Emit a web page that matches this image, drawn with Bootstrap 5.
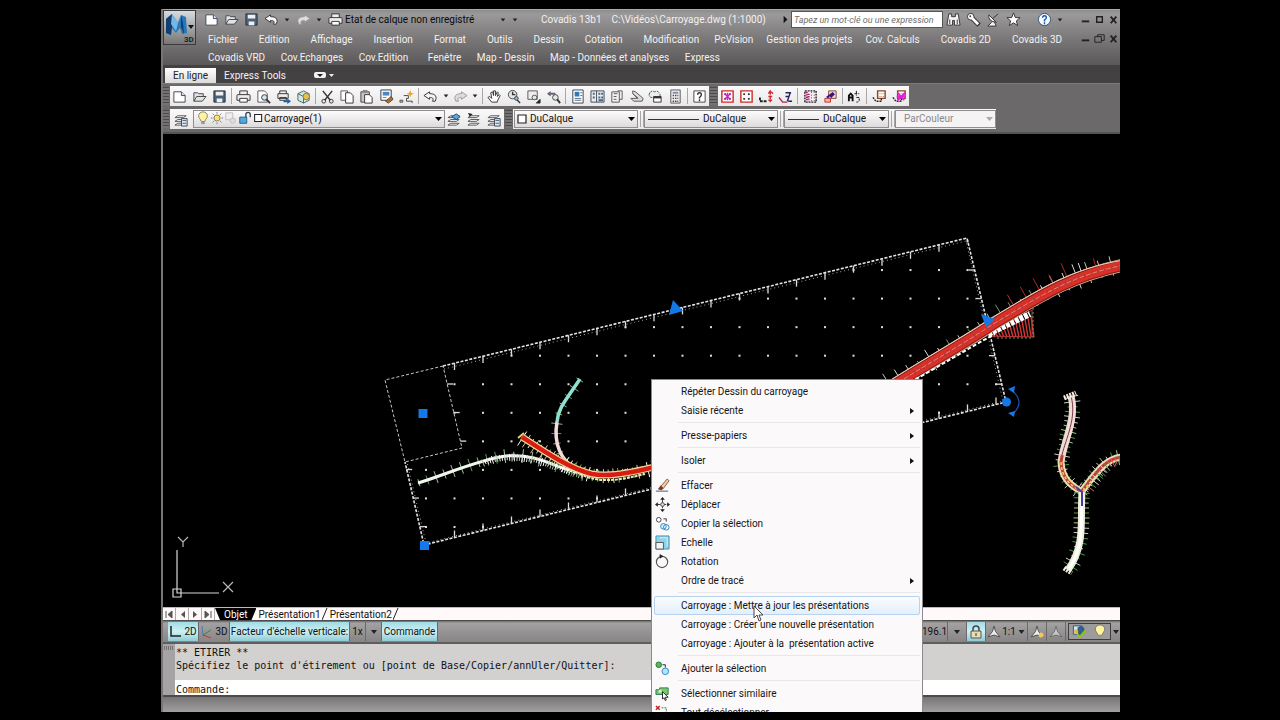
<!DOCTYPE html>
<html lang="fr">
<head>
<meta charset="utf-8">
<meta name="viewport" content="width=device-width, initial-scale=1">
<title>Covadis 13b1</title>
<link href="https://cdn.jsdelivr.net/npm/bootstrap@5.3.0/dist/css/bootstrap.min.css" rel="stylesheet">
<style>
  body { background: #000; font: 10px/14px Roboto, "Liberation Sans", sans-serif; color: #111; min-height: 100vh; padding: 9px 0 8px; }
  button, input, select { font: inherit; color: inherit; border: 0; background: none; padding: 0; }
  a { color: inherit; text-decoration: none; }
  svg { display: block; flex: none; }
  .app { width: 75%; padding-left: 1px; position: relative; overflow: hidden; }
  .app-frame { border-left: 2px solid #777576; min-height: 100%; }
  .cell { width: 20px; height: 18px; display: flex; align-items: center; justify-content: center; flex: none; }
  .cell-s { width: 12px; }
  .header-bar { background: linear-gradient(#8e8c8d, #9b999a 8%, #7b797a 50%, #5a5858); height: 56px; color: #f3f1f1; border-top: 1px solid #aaa; }
  .app-btn { width: 33px; height: 35px; border: 1px solid #3c3b3b; background: linear-gradient(#d9dcdf, #9d9d9e 60%, #777576); align-self: flex-start; }
  .quick { height: 19px; }
  .quick-start { margin-left: 5px; }
  .quick-end { margin-right: 11px; }
  .quick-win { padding-left: 12px; }
  .status-name { width: 152px; color: #0a0a0a; }
  .doc-title { width: 238px; white-space: nowrap; }
  .search { width: 152px; height: 17px; background: #fff; border: 1px solid #555; font-size: 9px; font-style: italic; padding: 0 2px; color: #555; }
  .search::placeholder { color: #6f6d6d; opacity: 1; }
  .menus { margin: 2px 0 0 12px; height: 17px; align-items: center; white-space: nowrap; }
  .menus-start { gap: 21px; margin-right: 15px; }
  .menus-end { gap: 13px; }
  .menus-2 { width: 512px; margin: 1px 0 0 12px; height: 17px; align-items: center; white-space: nowrap; }
  .win { width: 14px; }
  .ribbon { background: #434142; height: 18px; color: #f3f1f1; }
  .ribbon .active { background: linear-gradient(#fff, #dcdada); color: #222; }
  .tab-a { width: 51px; height: 15px; margin-left: 2px; }
  .tab-b { width: 78px; height: 15px; }
  .tab-c { margin-left: 20px; }
  .pill { width: 12px; height: 6px; background: #f3f1f1; border-radius: 2px; }
  .panel { background: #6b696a; height: 51px; border-top: 1px solid #7d7b7c; border-bottom: 2px solid #555354; padding-top: 2px; }
  .bar-1 { margin-bottom: 3px; }
  .strip { background: linear-gradient(#fbfafa, #e9e7e8); height: 20px; }
  .strip .cell { width: auto; flex: 2 1 0; min-width: 0; }
  .strip .cell-s { flex-grow: 1; }
  .grip { width: 6px; height: 18px; background: repeating-linear-gradient(#4c4a4b 0 1px, #747273 1px 3px); margin: 0 1px 0 0; flex: none; }
  .grip-m { width: 7px; margin: 0 1px; }
  .rule { width: 1px; height: 16px; background: #a8a6a6; margin: 0 2px; flex: none; }
  .combo { appearance: none; height: 18px; border: 1px solid #8f8d8e; color: #111; background: url("data:image/svg+xml,%3Csvg xmlns='http://www.w3.org/2000/svg' width='7' height='4'%3E%3Cpath d='M0 0h7L3.500 4z'/%3E%3C/svg%3E") no-repeat right 2px center, linear-gradient(#fdfcfc, #dddbdc); }
  .combo-layer { width: 252px; padding-left: 70px; }
  .combo-color { width: 124px; padding-left: 15px; }
  .combo-line { background-image: url("data:image/svg+xml,%3Csvg xmlns='http://www.w3.org/2000/svg' width='7' height='4'%3E%3Cpath d='M0 0h7L3.500 4z'/%3E%3C/svg%3E"), linear-gradient(#333, #333), linear-gradient(#fdfcfc, #dddbdc); background-repeat: no-repeat; }
  .combo-l1 { width: 134px; padding-left: 58px; background-position: right 2px center, 3px center, 0 0; background-size: auto, 51px 1px, auto; }
  .combo-l2 { width: 105px; padding-left: 38px; background-position: right 2px center, 3px center, 0 0; background-size: auto, 31px 1px, auto; }
  .combo-off { width: 101px; padding-left: 8px; color: #8a8889; opacity: 1; background: url("data:image/svg+xml,%3Csvg xmlns='http://www.w3.org/2000/svg' width='7' height='4'%3E%3Cpath fill='%23aaa' d='M0 0h7L3.500 4z'/%3E%3C/svg%3E") no-repeat right 2px center #f5f3f4; }
  .over { position: absolute; left: 3px; top: 1px; pointer-events: none; }
  .lead-in { padding-left: 1px; }
  .stage { background: #000; min-height: 0; }
  .sheet-tabs { height: 13px; background: #fff9f9; line-height: 13px; border-top: 1px solid #bbb; }
  .sheet-tabs .nav-b { width: 13px; border-right: 1px solid #aaa; height: 12px; }
  .sheet { height: 12px; padding: 0 1px 0 2px; color: #111; }
  .sheet.on { background: #000; color: #fff; clip-path: polygon(0 0, 100% 0, calc(100% - 5px) 100%, 5px 100%); padding: 0 9px; }
  .slash { width: 6px; height: 12px; }
  .status { height: 22px; background: linear-gradient(#6d6b6c, #a3a1a2 10%, #868485); border-top: 1px solid #4e4c4d; line-height: 19px; padding-left: 5px; white-space: nowrap; align-items: center; }
  .seg { height: 19px; border-right: 1px solid #6a6869; display: flex; align-items: center; justify-content: center; flex: none; gap: 2px; padding: 0; }
  .seg.lit { background: linear-gradient(#a2dbe4, #cdf0f4 50%, #8fcbd6); }
  .seg-caret { width: 16px; } .seg-icon { width: 19px; } .seg-axis { width: 31px; } .seg-scale { width: 42px; } .seg-cmd { width: 56px; } .seg-factor { width: 120px; }
  .coords { width: 26px; }
  .tray { width: 43px; height: 17px; border: 1px solid #3f3d3e; background: #9d9b9c; margin: 0 2px; }
  .console { background: #d3d0d0; border-top: 2px solid #5f5d5e; font: 10px/13px "DejaVu Sans Mono", monospace; }
  .console-grip { width: 12px; background: #a5a3a4; }
  .log { height: 36px; padding: 2px 0 0 1px; }
  .prompt { height: 15px; background: #fff; padding: 3px 0 0 1px; }
  .foot { height: 17px; border-top: 2px solid #4c4a4b; background: linear-gradient(#777576, #a19fa0); }
  .context { position: absolute; left: 491px; top: 370px; width: 272px; background: #fcf9fa; border: 1px solid #8b898a; padding: 2px; z-index: 2; }
  .context button { display: flex; align-items: center; width: 100%; height: 19px; border: 1px solid transparent; border-radius: 2px; color: #151515; }
  .context .ico { width: 26px; display: flex; }
  .context .hot { border-color: #b5d3ee; background: linear-gradient(#fafcfe, #e3effb); }
  .context .line { height: 1px; background: #e9e7ea; margin: 2px 0 3px 24px; }
  .pointer { position: absolute; left: 593px; top: 596px; z-index: 3; }
</style>
</head>
<body class="d-flex flex-column">
<svg width="0" height="0" class="position-absolute" aria-hidden="true">
  <defs>
    <g id="new"><path d="M2 3h8l4 4v7H2z" fill="#fff" stroke="#3a4656"/><path d="M10 3v4h4" fill="#dde" stroke="#3a4656"/></g>
    <g id="open"><path d="M2 13V4h4l1 1h5v3M2 13l3-5h10l-4 5z" fill="#dfe2e6" stroke="#444"/></g>
    <g id="save"><path d="M2 2h12v12H2z" fill="#4d6275" stroke="#27333f"/><path d="M4 3h8v4H4zM5 10h6v4H5z" fill="#edf1f5"/></g>
    <g id="print"><path d="M4 6V2h8v4M2 6h12q1 0 1 1v5H1V7q0-1 1-1z" fill="#eee" stroke="#333"/><path d="M4 10h8v4H4z" fill="#fff" stroke="#333"/></g>
    <g id="preview"><path d="M2 2h7l3 3v9H2z" fill="#fff" stroke="#555"/><circle cx="9" cy="9" r="3" fill="#cfe6ef" stroke="#333"/><path d="M11 11l4 4" stroke="#333" stroke-width="2"/></g>
    <g id="publish"><path d="M4 5V2h7v3M2 5h11v5H2zM4 9h7v3H4z" fill="#eee" stroke="#333"/><path d="M8 12h4v-2l4 3-4 3v-2H8z" fill="#1d5fae"/></g>
    <g id="dwf"><path d="M2 5l6-3 6 3v7l-6 3-6-3z" fill="#cfe8e3" stroke="#4a666b"/><path d="M2 5l6 3v7" fill="none" stroke="#4a666b"/><circle cx="11" cy="8" r="3.500" fill="#e8c23c" stroke="#777"/></g>
    <g id="cut"><path d="M3 2l8 10M13 2L5 12" stroke="#333" stroke-width="1.500"/><circle cx="4" cy="13" r="2" fill="none" stroke="#333"/><circle cx="12" cy="13" r="2" fill="none" stroke="#333"/></g>
    <g id="copy"><path d="M1 2h7v10H1z" fill="#fff" stroke="#555"/><path d="M6 4h5l3 3v8H6z" fill="#fff" stroke="#333"/></g>
    <g id="paste"><path d="M2 3h9v11H2z" fill="#c9c5b8" stroke="#444"/><path d="M4 1h5v3H4z" fill="#888"/><path d="M6 6h5l3 3v6H6z" fill="#fff" stroke="#333"/></g>
    <g id="match"><path d="M2 1h11v11H2z" fill="#fff" stroke="#334"/><path d="M4 3h7v4H4z" fill="#4a88be"/><path d="M4 9h4" stroke="#4a88be"/><path d="M7 13l6-5 2 3-5 4z" fill="#b3702c" stroke="#543"/></g>
    <g id="block"><path d="M1 12h3v2H1zM5 7h5v3H8v3h6v2" fill="none" stroke="#444"/><path d="M12 1l1 3 3 1-3 1-1 3-1-3-3-1 3-1z" fill="#f0a028"/></g>
    <g id="undo"><path d="M1 7l6-4v2c4 0 7 1 7 5l-1 3h-3c2-3 0-4-3-4v2z" fill="#f6f6f6" stroke="#333"/></g>
    <g id="redo"><path d="M15 7L9 3v2c-4 0-7 1-7 5l1 3h3c-2-3 0-4 3-4v2z" fill="#ddd" stroke="#999"/></g>
    <g id="car"><path d="M5 6h6l-3 4z" fill="#222"/></g>
    <g id="right"><path d="M6 4l4 4-4 4z" fill="#111"/></g>
    <g id="pan"><path d="M5 14L1 9l2-1 2 2-1-6 2-1 1 4V2h2v5l2-4 1 1-1 4 2-2 1 1-3 6v1z" fill="#fff" stroke="#333"/></g>
    <g id="zrt"><circle cx="6" cy="6" r="4.500" fill="#dce8ee" stroke="#444"/><path d="M6 3v3h3M10 11l4 4" fill="none" stroke="#333" stroke-width="1.500"/><circle cx="10" cy="10" r="2" fill="#9cb8c4" stroke="#444"/></g>
    <g id="zwin"><path d="M2 2h10v9H2z" fill="#eee" stroke="#555"/><circle cx="9" cy="9" r="2.500" fill="#dce8ee" stroke="#555"/><path d="M15 11v4h-4z" fill="#111" stroke="#333"/></g>
    <g id="zprev"><path d="M1 5l4-3v2h5v2H5v2z" fill="#667"/><circle cx="10" cy="9" r="3" fill="#dce8ee" stroke="#444"/><path d="M12 11l3 4" stroke="#333" stroke-width="2"/></g>
    <g id="props"><path d="M3 1h11v14H3z" fill="#fff" stroke="#345"/><path d="M5 3h5v5H5z" fill="#2c78b8"/><path d="M11 4h2M11 7h2M5 10h7M5 12h7" stroke="#567"/></g>
    <g id="dc"><path d="M1 2h14v12H1zM7 2v12" fill="#e8edf2" stroke="#445"/><path d="M3 4h2v2H3zM3 8h2v2H3zM9 4h2v2H9zM12 4h2v2h-2zM9 8h2v2H9zM12 8h2v2h-2zM9 11h5v2H9z" fill="#467"/></g>
    <g id="tp"><path d="M3 3h8v11H3zM9 2h5v9h-3" fill="#f2f2f2" stroke="#555"/><path d="M5 5h4M5 8h3M5 11h3" stroke="#555"/></g>
    <g id="sheets"><path d="M2 10l3 3h9l1-3-8-7-3-1v3l5 5zM4 5l6 5" fill="#ddd" stroke="#555"/></g>
    <g id="mark"><path d="M2 4q2-3 5-1 4-2 5 2 2 1 0 4H3q-3-2-1-5z" fill="#e8eee8" stroke="#456" stroke-dasharray="3 1"/><path d="M6 8h8v6H6z" fill="#fff" stroke="#333"/><path d="M6 9h8" stroke="#333" stroke-width="2"/></g>
    <g id="calc"><path d="M3 1h10v14H3z" fill="#eee" stroke="#555"/><path d="M5 3h6v2H5z" fill="#88a"/><path d="M5 7h6M5 10h6M5 13h6" stroke="#444" stroke-width="1.500" stroke-dasharray="1.500 1"/></g>
    <g id="help"><path d="M2 2h12v12H2z" fill="#fff" stroke="#444"/><path d="M6 6q0-2 2-2t2 2q0 1-2 3v1M8 11v2" fill="none" stroke="#333" stroke-width="1.500"/></g>
    <g id="gridr"><path d="M2 2h12v12H2z" fill="#fff" stroke="#cf2c26" stroke-width="1.500"/><path d="M5 5h1v1H5zM10 5h1v1h-1zM5 10h1v1H5zM10 10h1v1h-1z" stroke="#222" fill="#222"/></g>
    <g id="gridm"><use href="#gridr"/><path d="M5 5l6 6M11 5l-6 6M8 4v8" stroke="#d020c8" stroke-width="1.500"/></g>
    <g id="pole"><path d="M1 9v4h7" fill="none" stroke="#222" stroke-width="2" stroke-dasharray="3 1"/><path d="M12 2v12M10 5l2-3 3 3M10 8h4M10 12h4" fill="none" stroke="#cf2c36" stroke-width="1.500" stroke-dasharray="4 1"/></g>
    <g id="pole2"><path d="M1 9l4 5h5" fill="none" stroke="#b02a58" stroke-width="1.500"/><path d="M8 4h6M13 4l-3 9M8 8h3M11 13h4" fill="none" stroke="#27275e" stroke-width="1.500"/></g>
    <g id="hatch"><path d="M2 2h12v12H2z" fill="#f8eef4" stroke="#222" stroke-width="1.500" stroke-dasharray="2 1"/><path d="M4 3v10M6 5v8" stroke="#a02060" stroke-width="2" stroke-dasharray="1.500 1"/><path d="M9 3v10M12 3v10" stroke="#333" stroke-dasharray="1 2"/></g>
    <g id="hatch2"><path d="M6 2h8v8H6z" fill="#f2d9c8" stroke="#8c4820"/><path d="M2 10h6v4H2z" fill="#f6b8a8" stroke="#c03030"/><path d="M4 9l7-5M8 9l4-4" stroke="#2c1690" stroke-width="2"/></g>
    <g id="alpha"><path d="M2 13V7l2-2 2 2v6M2 9h4" fill="none" stroke="#111" stroke-width="2"/><path d="M10 2v5M8 5h5M10 9h3v3q0 2-3 2" fill="none" stroke="#111" stroke-dasharray="3 1"/></g>
    <g id="tbl"><path d="M6 2h8v8H6z" fill="#fff" stroke="#8c4820" stroke-width="1.500"/><path d="M8 5h5M8 8h5" stroke="#b07050" stroke-dasharray="1 1"/><path d="M1 9l3 4h6v-3" fill="none" stroke="#222" stroke-width="1.500" stroke-dasharray="2 1"/></g>
    <g id="tblm"><use href="#tbl"/><path d="M6 12l8-8M6 4l7 8M5 8h9" stroke="#e020d8" stroke-width="2"/></g>
    <g id="layers"><path d="M4 4h9l-3 2H1zM4 8h9l-3 2H1zM4 12h9l-3 2H1z" fill="#f6f6f6" stroke="#555"/></g>
    <g id="layprop"><use href="#layers"/><path d="M8 7h6v8H8z" fill="#dfe8f0" stroke="#445"/><path d="M9 9h4M9 12h4" stroke="#368"/></g>
    <g id="laycur"><use href="#layers"/><path d="M5 5l5-3 4 3-4 3z" fill="#58a8d8" stroke="#247"/></g>
    <g id="layback"><use href="#layers"/><path d="M1 1l5 1-3 3z" fill="#222"/></g>
    <g id="bulb"><path d="M6 12C5 9 3 8 3 5.500a5 4.500 0 0 1 10 0C13 8 11 9 10 12z" fill="#fff3a0" stroke="#776"/><path d="M6 12h4v3H6z" fill="#999"/></g>
    <g id="sun"><circle cx="8" cy="8" r="3.500" fill="#fbe26c" stroke="#776"/><path d="M8 1v2M8 13v2M1 8h2M13 8h2M3 3l1.500 1.500M11.500 11.500L13 13M3 13l1.500-1.500M11.500 4.500L13 3" stroke="#776"/></g>
    <g id="vp"><path d="M2 2h8v8H2z" fill="#eee" stroke="#bbb"/><circle cx="10" cy="11" r="3" fill="#ddd" stroke="#bbb"/></g>
    <g id="unlock"><path d="M2 7h8v7H2z" fill="#5aa6dc" stroke="#135a8c"/><path d="M9 7V4q0-2.500 2.500-2.500T14 4v3" fill="none" stroke="#345" stroke-width="1.500"/></g>
    <g id="sq"><path d="M3 4h8v8H3z" fill="#fff" stroke="#222" stroke-width="1.200"/></g>
    <g id="binoc"><path d="M3 2h3v3h4V2h3l2 12H9v-5H7v5H1z" fill="#f4f4f4" stroke="#333"/><path d="M4 8v5M12 8v5" stroke="#333"/></g>
    <g id="key"><path d="M7 7l7 7" stroke="#333" stroke-width="5"/><circle cx="5" cy="5" r="3.500" fill="#fff" stroke="#333"/><path d="M6 6l7 7" stroke="#fff" stroke-width="3"/><circle cx="4.500" cy="4.500" r="1" fill="#444"/></g>
    <g id="dish"><path d="M3 3q-1 7 8 8zM7 7l6-5M6 11l-4 4h9l-2-4" fill="#f4f4f4" stroke="#333"/></g>
    <g id="star"><path d="M8 1l2 5h5l-4 3.500 1.500 5L8 11.500 3.500 14.500l1.500-5L1 6h5z" fill="#fff" stroke="#333"/></g>
    <g id="qm"><circle cx="8" cy="8" r="6.500" fill="#f4f8fc" stroke="#2a4f80"/><path d="M6 6q0-2 2-2t2 2q0 1-2 2.500V10M8 11v2" fill="none" stroke="#1a56a8" stroke-width="1.500"/></g>
    <g id="min"><path d="M4 10h8" stroke="#222" stroke-width="2"/></g>
    <g id="max"><path d="M5 5h6v6H5z" fill="none" stroke="#222" stroke-width="1.500"/></g>
    <g id="rest"><path d="M6 6V4h7v6h-3M3 6h7v6H3z" fill="none" stroke="#222"/></g>
    <g id="close"><path d="M5 5l6 7M11 5l-6 7" stroke="#222" stroke-width="2"/></g>
    <g id="erase"><path d="M1 14h13" stroke="#357"/><path d="M6 9L13 1l2 2-6 8z" fill="#e8d0a8" stroke="#854"/><path d="M3 12l3-4 3 3-2 2z" fill="#7a3a20"/></g>
    <g id="move"><path d="M8 1v14M1 8h14" stroke="#333" stroke-dasharray="5 1"/><path d="M8 0l2.500 3h-5zM8 16l2.500-3h-5zM0 8l3-2.500v5zM16 8l-3-2.500v5z" fill="#222"/><circle cx="8" cy="8" r="2" fill="#ddd" stroke="#444"/></g>
    <g id="cpy"><circle cx="4" cy="4" r="2.500" fill="#fff" stroke="#444"/><path d="M9 3h3v3" fill="none" stroke="#333"/><circle cx="9" cy="11" r="3" fill="#dff2fb" stroke="#2a86c0"/><circle cx="12" cy="12" r="3" fill="none" stroke="#2a86c0"/></g>
    <g id="scale"><path d="M1 1h14v14H1z" fill="#8fd2e6" stroke="#4492b0"/><path d="M5 3h8v9" fill="none" stroke="#d8f2fa"/><path d="M1 8h8v7H1z" fill="#eef4f6" stroke="#555"/></g>
    <g id="rot"><circle cx="7.500" cy="8.500" r="6" fill="none" stroke="#555" stroke-width="1.200"/><path d="M5 0l4 2.500L5 5z" fill="#222"/></g>
    <g id="addsel"><circle cx="4" cy="4" r="3" fill="#5cb848" stroke="#275"/><path d="M8 4h3v3" fill="none" stroke="#222"/><circle cx="11" cy="11" r="3.500" fill="#b8e4f8" stroke="#2a86c0"/></g>
    <g id="simil"><path d="M1 4h4v-2h9v7H1z" fill="#7cc868" stroke="#275"/><path d="M4 4h3v3H4z" fill="#d8f4cc"/><path d="M8 6l6 6h-3l1 3-1 .5L9.500 12.500 8 14z" fill="#fff" stroke="#222"/></g>
    <g id="desel"><path d="M1 1l4 4M5 1L1 5" stroke="#c02020" stroke-width="1.500"/><path d="M7 3h5v6M3 8v5h6" fill="none" stroke="#275" stroke-dasharray="2 1"/></g>
    <g id="scl"><path d="M8 2l1.500 5.500L14 13l-6-2-6 2 4.500-5.500z" fill="#eee" stroke="#555"/></g>
  </defs>
</svg>

<main class="app mx-auto flex-grow-1 d-flex flex-column">
<div class="app-frame d-flex flex-column flex-grow-1">
  <header class="header-bar d-flex">
    <button class="app-btn" aria-label="Menu de l'application">
      <svg width="31" height="33" viewBox="0 0 31 33"><path d="M2 8l6-5 6 9 3-8 5 2 1 16-5 1-2-6-4 5-5-6v8l-5-2z" fill="#2878bb"/><path d="M2 8l6-5v14l-1 7-5-2z" fill="#123f70"/><path d="M8 3l6 9-2 8-5-7z" fill="#75b8e6"/><path d="M17 4l2 8 1 11-3-7z" fill="#0f3f73"/><path d="M24 14h6l-3 4z" fill="#111"/><text x="20" y="31" font-size="8" font-weight="700" fill="#222">3D</text></svg>
    </button>
    <div class="flex-grow-1">
      <div class="quick d-flex align-items-center">
        <div class="quick-start d-flex" data-icons="new:Nouveau open:Ouvrir save:Enregistrer undo:Annuler car:Historique redo:Rétablir car:Suite print:Tracer"></div>
        <span class="status-name">Etat de calque non enregistré</span>
        <div class="d-flex flex-grow-1" data-icons="car:Calques car:Personnaliser"></div>
        <span class="doc-title">Covadis 13b1 &nbsp; &nbsp;C:\Vidéos\Carroyage.dwg (1:1000)</span>
        <div class="d-flex" data-icons="right:Développer"></div>
        <input class="search" type="text" aria-label="Rechercher" placeholder="Tapez un mot-clé ou une expression">
        <div class="quick-end d-flex" data-icons="binoc:Rechercher key:Abonnement dish:Communication star:Favoris"></div>
        <div class="d-flex" data-icons="qm:Aide car:Options"></div>
        <div class="quick-win d-flex" data-win="min:Réduire max:Agrandir close:Fermer"></div>
      </div>
      <div class="d-flex">
        <nav class="menus d-flex flex-grow-1">
          <div class="menus-start d-flex"><a href="#">Fichier</a><a href="#">Edition</a><a href="#">Affichage</a><a href="#">Insertion</a><a href="#">Format</a><a href="#">Outils</a><a href="#">Dessin</a><a href="#">Cotation</a><a href="#">Modification</a></div>
          <div class="menus-end d-flex"><a href="#">PcVision</a><a href="#">Gestion des projets</a><a href="#">Cov. Calculs</a><a href="#" class="ps-2">Covadis 2D</a><a href="#" class="ps-2">Covadis 3D</a></div>
        </nav>
        <div class="d-flex" data-win="min:Réduire rest:Restaurer close:Fermer"></div>
      </div>
      <nav class="menus-2 d-flex justify-content-between">
        <a href="#">Covadis VRD</a><a href="#">Cov.Echanges</a><a href="#">Cov.Edition</a><a href="#" class="ps-1">Fenêtre</a><a href="#">Map - Dessin</a><a href="#">Map - Données et analyses</a><a href="#">Express</a>
      </nav>
    </div>
  </header>

  <div class="ribbon d-flex align-items-end">
    <button class="tab-a active">En ligne</button>
    <button class="tab-b">Express Tools</button>
    <button class="tab-c d-flex align-items-center mb-1" aria-label="Réduire le ruban"><span class="pill d-flex justify-content-center"><svg width="6" height="6" viewBox="0 0 6 6"><path d="M0 2h6L3 5z" fill="#222"/></svg></span><svg width="14" height="8" viewBox="0 0 14 8"><path d="M3 3h5L5.500 6z" fill="#eee"/></svg></button>
  </div>

  <section class="panel">
    <div class="bar-1 d-flex align-items-center">
      <span class="grip"></span>
      <div class="strip d-flex align-items-center" data-tools="59=new:Nouveau open:Ouvrir save:Enregistrer|79=print:Tracer preview:Aperçu publish:Publier dwf:DWF|98=cut:Couper copy:Copier paste:Coller match:Propriétés block:Bloc|59=undo:Annuler car:Historique redo:Rétablir car:Suite|78=pan:Panoramique zrt:Zoom zwin:Fenêtre zprev:Précédent|117=props:Propriétés dc:DesignCenter tp:Palettes sheets:Feuilles mark:Annotations calc:Calculatrice|19=help:Aide"></div>
      <span class="grip grip-m"></span>
      <div class="strip d-flex align-items-center" data-tools="77=gridm:Carroyage gridr:Grille pole:Point pole2:Polygone|40=hatch:Hachures hatch2:Remplir|19=alpha:Texte|40=tbl:Tableau tblm:Supprimer"></div>
    </div>
    <div class="d-flex align-items-center">
      <span class="grip"></span>
      <div class="strip d-flex align-items-center">
        <div class="d-flex" style="width:23px" data-icons="layprop:Calques"></div>
        <div class="position-relative">
          <select class="combo combo-layer" aria-label="Calque"><option>Carroyage(1)</option></select>
          <span class="over d-flex" id="layerState"></span>
        </div>
        <div class="d-flex" style="width:59px" data-icons="laycur:Courant layback:Précédent layprop:Etats"></div>
      </div>
      <span class="grip grip-m"></span>
      <div class="strip lead-in d-flex align-items-center">
        <div class="position-relative">
          <select class="combo combo-color" aria-label="Couleur"><option>DuCalque</option></select>
          <svg class="over" width="14" height="16" viewBox="2 0 14 16"><use href="#sq"/></svg>
        </div>
        <span class="rule"></span><span class="rule ms-0 me-0"></span>
        <select class="combo combo-line combo-l1" aria-label="Type de ligne"><option>DuCalque</option></select>
        <span class="rule"></span><span class="rule ms-0 me-0"></span>
        <select class="combo combo-line combo-l2" aria-label="Epaisseur"><option>DuCalque</option></select>
        <span class="rule"></span><span class="rule ms-0 me-0"></span>
        <select class="combo combo-off" aria-label="Style de tracé" disabled><option>ParCouleur</option></select>
      </div>
    </div>
  </section>

  <section class="stage flex-grow-1 position-relative">
    <svg id="plan" class="position-absolute w-100 h-100" viewBox="163 134 957 473" preserveAspectRatio="xMidYMid slice" role="img" aria-label="Plan du projet routier"></svg>
  </section>

  <div class="sheet-tabs d-flex">
    <button class="nav-b" aria-label="Premier"><svg width="12" height="11" viewBox="0 0 12 11"><path d="M3 2v7M9 2v7L5 5.500z" stroke="#555" fill="#555"/></svg></button>
    <button class="nav-b" aria-label="Précédent"><svg width="12" height="11" viewBox="0 0 12 11"><path d="M9 2v7L5 5.500z" fill="#555"/></svg></button>
    <button class="nav-b" aria-label="Suivant"><svg width="12" height="11" viewBox="0 0 12 11"><path d="M4 2v7l4-3.500z" fill="#555"/></svg></button>
    <button class="nav-b" aria-label="Dernier"><svg width="12" height="11" viewBox="0 0 12 11"><path d="M3 2v7l4-3.500zM9 2v7" stroke="#555" fill="#555"/></svg></button>
    <a href="#" class="sheet on">Objet</a>
    <a href="#" class="sheet">Présentation1</a><svg class="slash" viewBox="0 0 6 12"><path d="M0 12L5 0" stroke="#222"/></svg>
    <a href="#" class="sheet">Présentation2</a><svg class="slash" viewBox="0 0 6 12"><path d="M0 12L5 0" stroke="#222"/></svg>
  </div>

  <div class="status d-flex">
    <button class="seg lit seg-axis"><svg width="13" height="14" viewBox="0 0 13 14"><path d="M2 1v10h10" fill="none" stroke="#222" stroke-width="1.500"/></svg>2D</button>
    <button class="seg seg-axis"><svg width="13" height="14" viewBox="0 0 13 14"><path d="M2 1l1 10" stroke="#57a"/><path d="M3 10l8-5" stroke="#3a8a3a"/><path d="M3 10l8 3" stroke="#c33"/></svg>3D</button>
    <button class="seg lit seg-factor">Facteur d'échelle verticale:</button>
    <button class="seg seg-caret">1x</button>
    <button class="seg seg-caret" aria-label="Facteur"><svg width="14" height="16" viewBox="1 0 14 16"><use href="#car"/></svg></button>
    <button class="seg lit seg-cmd">Commande</button>
    <span class="flex-grow-1"></span>
    <span class="seg coords">196.1</span>
    <button class="seg seg-icon" aria-label="Echelle de vue"><svg width="16" height="16"><use href="#car"/></svg></button>
    <button class="seg lit seg-icon" aria-label="Verrouiller"><svg width="14" height="16" viewBox="0 0 14 16"><path d="M4 8V5q0-3 3-3t3 3v3" fill="none" stroke="#444" stroke-width="1.500"/><path d="M2 7h10v7H2z" fill="#e8ddb0" stroke="#555"/><path d="M7 9v3" stroke="#333"/></svg></button>
    <button class="seg seg-scale gap-0"><svg width="16" height="16"><use href="#scl"/></svg>1:1<svg width="11" height="16" viewBox="3 0 10 16"><use href="#car"/></svg></button>
    <button class="seg seg-icon" aria-label="Annotations visibles"><svg width="16" height="16"><use href="#scl"/><circle cx="12" cy="11" r="2.500" fill="#f0c860"/></svg></button>
    <button class="seg seg-icon" aria-label="Echelles automatiques"><svg width="16" height="16" opacity=".6"><use href="#scl"/></svg></button>
    <span class="tray d-flex align-items-center justify-content-around"><svg width="16" height="15" viewBox="0 0 16 16"><path d="M2 2h9v9H2z" fill="#cfe6f4" stroke="#357"/><ellipse cx="10" cy="7" rx="4" ry="5" fill="#345f8c"/><path d="M6 11l3 3 6-7" fill="none" stroke="#8fc020" stroke-width="2.500"/><path d="M3 6h4v4H3z" fill="#e8b83c"/></svg><svg width="16" height="15" viewBox="0 0 16 16"><use href="#bulb"/></svg></span>
    <button class="seg border-0" aria-label="Menu d'état"><svg width="7" height="16" viewBox="5 0 7 16"><use href="#car"/></svg></button>
  </div>

  <div class="console d-flex">
    <div class="console-grip"><svg width="12" height="6" viewBox="0 0 12 6"><path d="M1 3h10M1 5h10" stroke="#444" stroke-dasharray="1 1"/></svg></div>
    <div class="flex-grow-1">
      <div class="log"><div>** ETIRER **</div><div>Spécifiez le point d'étirement ou [point de Base/Copier/annUler/Quitter]:</div></div>
      <label class="prompt d-flex align-items-center">Commande:<input class="flex-grow-1" aria-label="Ligne de commande"></label>
    </div>
  </div>
  <footer class="foot"></footer>
</div>

<div class="context" id="context" role="menu"></div>
<svg class="pointer" width="12" height="18" viewBox="0 0 12 18"><path d="M1 1v12l3-3 2 6 2-1-2-5h4z" fill="#fff" stroke="#444"/></svg>
</main>

<script src="https://cdn.jsdelivr.net/npm/bootstrap@5.3.0/dist/js/bootstrap.bundle.min.js"></script>
<script>
// Icon buttons
const icon = (id, s = 16) => `<svg width="${s}" height="${s}" viewBox="0 0 16 16"><use href="#${id}"/></svg>`;
const button = (spec, cls = '') => {
  const [id, label] = spec.split(':');
  return `<button class="cell ${id === 'car' || id === 'right' ? 'cell-s' : ''} ${cls}" aria-label="${label}">${icon(id, id === 'car' ? 12 : 15)}</button>`;
};
document.querySelectorAll('[data-icons]').forEach(e => e.innerHTML = e.dataset.icons.split(' ').map(s => button(s)).join(''));
document.querySelectorAll('[data-win]').forEach(e => e.innerHTML = e.dataset.win.split(' ').map(s => button(s, 'win')).join(''));
document.querySelectorAll('[data-tools]').forEach(e => e.innerHTML = e.dataset.tools.split('|').map(g => {
  const [w, list] = g.split('=');
  return `<div class="d-flex" style="width:${w}px">${list.split(' ').map(s => button(s)).join('')}</div>`;
}).join('<span class="rule"></span>'));
document.getElementById('layerState').innerHTML = ['bulb', 'sun', 'vp', 'unlock', 'sq'].map(i => icon(i, 14)).join('');

// Context menu
const items = [['', 'Répéter Dessin du carroyage'], ['', 'Saisie récente', 1], 0, ['', 'Presse-papiers', 1], 0, ['', 'Isoler', 1], 0,
  ['erase', 'Effacer'], ['move', 'Déplacer'], ['cpy', 'Copier la sélection'], ['scale', 'Echelle'], ['rot', 'Rotation'], ['', 'Ordre de tracé', 1], 0,
  ['', 'Carroyage : Mettre à jour les présentations', 0, 'hot'], ['', 'Carroyage : Créer une nouvelle présentation'], ['', 'Carroyage : Ajouter à la &nbsp;présentation active'], 0,
  ['addsel', 'Ajouter la sélection'], 0, ['simil', 'Sélectionner similaire'], ['desel', 'Tout désélectionner']];
document.getElementById('context').innerHTML = items.map(i => !i ? '<div class="line"></div>' :
  `<button role="menuitem" class="${i[3] || ''}"><span class="ico">${i[0] ? icon(i[0], 15) : ''}</span>${i[1]}${i[2] ? '<svg class="ms-auto me-1" width="6" height="8" viewBox="0 0 6 8"><path d="M1 1l4 3-4 3z" fill="#111"/></svg>' : ''}</button>`).join('');

// Site plan
const plan = document.getElementById('plan'), NS = 'http://www.w3.org/2000/svg';
const add = (tag, a) => { const n = document.createElementNS(NS, tag); for (const k in a) n.setAttribute(k, a[k]); plan.append(n); return n; };
const stroke = (d, c, w, dash) => add('path', { d, fill: 'none', stroke: c, 'stroke-width': w, ...(dash ? { 'stroke-dasharray': dash } : {}) });
let seed = 7; const rnd = () => (seed = seed * 16807 % 2147483647) / 2147483647;
function ticks(d, step, a, b, colors, w = 1) {
  const p = stroke(d, 'none', 1), L = p.getTotalLength();
  for (let s = 1; s < L; s += step) {
    const u = p.getPointAtLength(s), v = p.getPointAtLength(Math.min(L, s + 1)), o = p.getPointAtLength(s - 1);
    const l = Math.hypot(v.x - o.x, v.y - o.y) || 1, nx = -(v.y - o.y) / l, ny = (v.x - o.x) / l, k = .6 + rnd() * .6;
    stroke(`M${u.x - nx * a * k} ${u.y - ny * a * k}L${u.x + nx * b * k} ${u.y + ny * b * k}`, colors[Math.floor(rnd() * colors.length)], w);
  }
}
const topY = x => 380 - (x - 385) * 142 / 582, botY = x => 545 - (x - 424) * 143 / 582;
const leftX = y => 385 + (y - 380) * 39 / 165, rightX = y => 967 + (y - 238) * 39 / 164;
// grid of crosses
for (let x = 426; x < 1006; x += 28.5) for (let y = 241.5; y < 545; y += 28.55) {
  const inBox = x < 443 + (y - 366) * .23 && y < 462 - (x - 405) * .24;
  if (x > leftX(y) && x < rightX(y) && y > topY(x) && y < botY(x) && !inBox) add('rect', { x: x - 1, y: y - 1, width: 2, height: 2, fill: '#ddd' });
}
for (let x = 454.5; x < 967; x += 28.5) stroke(`M${x} ${topY(x)}v7`, '#ddd', 1.3);
for (let x = 454.5; x < 1006; x += 28.5) stroke(`M${x} ${botY(x)}v-7`, '#ddd', 1.3);
for (let y = 270; y < 400; y += 28.55) stroke(`M${rightX(y)} ${y}h-6`, '#ddd', 1.3);
for (let y = 469.5; y < 540; y += 28.55) stroke(`M${leftX(y)} ${y}h6`, '#ddd', 1.3);
for (let y = 384; y < 450; y += 28.55) stroke(`M${443 + (y - 366) * .23} ${y}h6`, '#ddd', 1.3);
stroke('M443 366L385 380L405 462L462 448Z', '#c8c8c8', 1, '3 2');
stroke('M443 366L967 238L1006 402L424 545L405 462', '#e4e4e4', 1.6, '3 1.5');
stroke('M444 369L966 241L1003 401L426 543L407 462', '#a8a8a8', 1, '1 3');
// side road, west
const a1 = 'M418 483C445 475 480 459 506 456C540 453 558 470 584 474';
ticks(a1, 9, 6, 6, ['#5c9a5c', '#9cc89c']); stroke(a1, '#f2f6ef', 3);
ticks('M482 463C515 448 550 464 584 476', 2.5, 3, 4, ['#fff', '#ddd', '#b6c8a8']);
const a2 = 'M580 379C566 400 556 410 556 430C555 452 562 462 574 470';
ticks(a2, 10, 6, 5, ['#5c9a5c', '#88b888']);
stroke('M580 379C566 400 558 408 557 422', '#8fe0d2', 3.5); stroke('M557 422C553 445 562 460 574 468', '#f4dcdc', 3.5);
const a3 = 'M522 437C545 452 570 469 592 474C612 478 635 472 700 456';
ticks(a3, 5, 6, 8, ['#6aa04a', '#d8d0a0', '#fff']); stroke(a3, '#e8d070', 7); stroke(a3, '#f3e8d0', 5.5); stroke(a3, '#d81c12', 4.5);
stroke('M580 474C600 484 620 480 645 474', '#efe6b8', 2, '3 1');
stroke('M518 438l6-5', '#e8d070', 2);
// main road, east
const b = 'M880 394C930 362 965 343 990 326C1040 296 1070 276 1124 265';
ticks(b, 12, 13, 9, ['#799a6c', '#c8c8b8', '#ddd']); ticks('M1015 310C1050 290 1070 278 1110 268', 15, 17, 2, ['#ddd', '#c03030', '#b02828']);
stroke('M988 336L1032 310V337L990 336', '#b03838', 1);
for (let x = 992; x < 1033; x += 3) stroke(`M${x} ${334 - (x - 992) * .45}L${x + 3} 337`, '#d23838', 1.4);
stroke('M1033 308V338H995', '#6e9a58', 1, '2 2');
stroke('M988 334L1030 314', '#fff', 6, '4 1');
stroke(b, '#d8c0a0', 13); stroke(b, '#8c1f1c', 11.5); stroke(b, '#db3026', 9); stroke(b, '#a83a4a', 4, '2 3'); stroke(b, '#f08060', 1, '5 2');
stroke('M878 388C930 355 965 336 990 319C1040 289 1070 269 1124 260', '#f3c8b8', 1);
stroke('M905 385C940 366 965 350 995 334', '#fff', 2, '4 2');
// junction, south east
const c1 = 'M1071 396C1077 418 1064 440 1061 462C1062 480 1072 486 1082 492', c2 = 'M1124 457C1105 457 1094 476 1082 491', c3 = 'M1082 492C1080 520 1086 545 1068 570';
for (const [d, r] of [[c1, 1], [c2, 1], [c3, 0]]) {
  ticks(d, 5, 7, 7, ['#4f9a44', '#a8c890', '#ccc']);
  stroke(d, r ? '#e9dcb8' : '#eef0d8', 7); stroke(d, r ? '#c23a3a' : '#fff', 3);
}
ticks(c2, 4, 9, 2, ['#c86858', '#4f9a44', '#ddd']);
stroke('M1071 396C1077 418 1066 438 1062 455', '#f0dcd8', 6); stroke('M1071 396C1077 418 1066 438 1062 455', '#7a3a48', 1);
stroke('M1064 398l12-5M1064 568l8 5', '#f4f0e0', 5, '2 1');
stroke('M1061 462C1062 480 1072 486 1082 492L1094 478', '#e0d84c', 1.5, '3 2'); stroke('M1076 487l6 5v14', '#4a3aa0', 2);
// grips
const blue = '#1479e8';
add('rect', { x: 418.5, y: 409, width: 9, height: 9, fill: blue }); add('rect', { x: 420, y: 541, width: 9, height: 9, fill: blue });
add('path', { d: 'M673 300L683 311L669 315Z', fill: blue }); add('path', { d: 'M981 314L995 319L986 327Z', fill: blue });
add('circle', { cx: 1006.5, cy: 402, r: 4.5, fill: blue });
stroke('M1010 389Q1027 401 1012 415', '#1a4fa8', 1.3);
add('path', { d: 'M1008 389l7-3-1 7zM1008 413l7-2-1 6z', fill: blue });
// UCS axes
stroke('M177 550V593H219M173 589h8v8h-8z', '#d8d8d8', 1.2); stroke('M178 537l5 5 5-5M183 542v5M223 582l10 10M233 582l-10 10', '#b8b8b8', 1.2);
</script>
</body>
</html>
